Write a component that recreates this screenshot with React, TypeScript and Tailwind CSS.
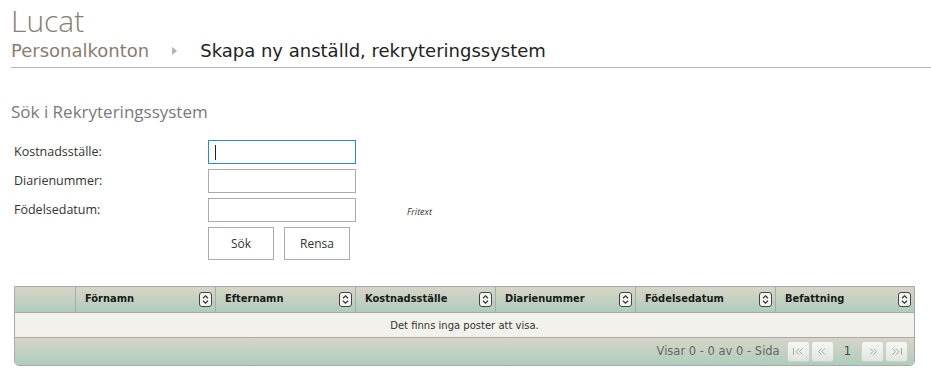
import React from "react";

const SortIcon = () => (
  <span className="absolute right-[3px] top-[5px] flex h-[15px] w-[13px] items-center justify-center rounded-[3px] border border-[#444] bg-[#f4f4f0]">
    <svg width="9" height="11" viewBox="0 0 9 11">
      <path d="M2 4.2 L4.5 1.8 L7 4.2" fill="none" stroke="#333" strokeWidth="1.2" />
      <path d="M2 6.8 L4.5 9.2 L7 6.8" fill="none" stroke="#333" strokeWidth="1.2" />
    </svg>
  </span>
);

const PagerBtn = ({ kind }: { kind: "first" | "prev" | "next" | "last" }) => {
  const c = "#a3aaa3";
  let content: React.ReactNode = null;
  if (kind === "first")
    content = (
      <>
        <path d="M3.5 3 V10" stroke={c} strokeWidth="1" />
        <path d="M9 3.5 L6 6.5 L9 9.5" fill="none" stroke={c} strokeWidth="1" />
        <path d="M12.5 3.5 L9.5 6.5 L12.5 9.5" fill="none" stroke={c} strokeWidth="1" />
      </>
    );
  if (kind === "prev")
    content = (
      <>
        <path d="M7.5 3.5 L4.5 6.5 L7.5 9.5" fill="none" stroke={c} strokeWidth="1" />
        <path d="M11 3.5 L8 6.5 L11 9.5" fill="none" stroke={c} strokeWidth="1" />
      </>
    );
  if (kind === "next")
    content = (
      <>
        <path d="M5 3.5 L8 6.5 L5 9.5" fill="none" stroke={c} strokeWidth="1" />
        <path d="M8.5 3.5 L11.5 6.5 L8.5 9.5" fill="none" stroke={c} strokeWidth="1" />
      </>
    );
  if (kind === "last")
    content = (
      <>
        <path d="M3.5 3.5 L6.5 6.5 L3.5 9.5" fill="none" stroke={c} strokeWidth="1" />
        <path d="M7 3.5 L10 6.5 L7 9.5" fill="none" stroke={c} strokeWidth="1" />
        <path d="M12.5 3 V10" stroke={c} strokeWidth="1" />
      </>
    );
  return (
    <span className="flex h-[21px] w-[23px] items-center justify-center rounded-[3px] border border-[#cdd2cb] bg-gradient-to-b from-[#f7f7f4] to-[#e0e5de]">
      <svg width="16" height="13" viewBox="0 0 16 13">
        {content}
      </svg>
    </span>
  );
};

export default function App() {
  const cols = ["Förnamn", "Efternamn", "Kostnadsställe", "Diarienummer", "Födelsedatum", "Befattning"];
  return (
    <div className="h-[382px] w-[931px] bg-white" style={{ fontFamily: '"Open Sans", "Noto Sans", sans-serif' }}>
      <div className="pl-[11px]">
        <div className="pt-[2px] text-[30px] font-light leading-[38px] text-[#8b7d71]" style={{ fontFamily: '"Open Sans", sans-serif' }}>Lucat</div>
        <div className="flex items-center text-[18px] leading-[22px]" style={{ fontFamily: '"DejaVu Sans", Verdana, sans-serif' }}>
          <span className="text-[#8b7d71]">Personalkonton</span>
          <svg className="ml-[23px] mr-[23px]" width="5" height="8" viewBox="0 0 5 8">
            <path d="M0 0 L5 4 L0 8 Z" fill="#b3b3b3" />
          </svg>
          <span className="text-[#222]">Skapa ny anställd, rekryteringssystem</span>
        </div>
        <div className="mt-[5px] h-px bg-[#b5b5b5]" />
      </div>

      <div className="pl-[11px] pt-[32px] text-[17px] leading-[24px] text-[#7a7a7a]">Sök i Rekryteringssystem</div>

      <div className="mt-[16px] pl-[14px] text-[12.5px] text-[#333]">
        <div className="flex h-[24px] items-center">
          <span className="w-[194px]">Kostnadsställe:</span>
          <div className="flex h-[24px] w-[148px] items-center border border-[#2b88d8] bg-white pl-[6px]">
            <span className="h-[15px] w-px bg-[#222]" />
          </div>
        </div>
        <div className="mt-[5px] flex h-[24px] items-center">
          <span className="w-[194px]">Diarienummer:</span>
          <div className="h-[24px] w-[148px] border border-[#ababab] bg-white" />
        </div>
        <div className="mt-[5px] flex h-[24px] items-center">
          <span className="w-[194px]">Födelsedatum:</span>
          <div className="h-[24px] w-[148px] border border-[#ababab] bg-white" />
          <span className="ml-[51px] mt-[4px] text-[9px] italic text-[#333]">Fritext</span>
        </div>
        <div className="mt-[5px] flex pl-[194px]">
          <div className="flex h-[33px] w-[66px] items-center justify-center border border-[#ababab] bg-white text-[12px]">Sök</div>
          <div className="ml-[10px] flex h-[33px] w-[66px] items-center justify-center border border-[#ababab] bg-white text-[12px]">Rensa</div>
        </div>
      </div>

      <div className="ml-[14px] mt-[26px] w-[901px] overflow-hidden rounded-b-[5px] border border-[#a9a9a9]" style={{ fontFamily: '"DejaVu Sans Condensed", Tahoma, sans-serif' }}>
        <div className="flex h-[26px] border-b border-[#a9a9a9] bg-gradient-to-b from-[#d7d5c7] to-[#aecdbc]">
          <div className="w-[61px] border-r border-[#a9a9a9]" />
          {cols.map((c, i) => (
            <div key={c} className={`relative flex items-center pl-[9px] text-[11px] font-bold text-[#1a1a1a] ${i === 5 ? "flex-1" : "w-[140px] border-r border-[#a9a9a9]"}`}>
              {c}
              <SortIcon />
            </div>
          ))}
        </div>
        <div className="flex h-[25px] items-center justify-center border-b border-[#a9a9a9] bg-[#f2f1ec] text-[10px] text-[#333]" style={{ fontFamily: '"DejaVu Sans", Verdana, sans-serif' }}>
          Det finns inga poster att visa.
        </div>
        <div className="flex h-[27px] items-center justify-end gap-[1px] bg-gradient-to-b from-[#d7d5c7] to-[#aecdbc] pr-[6px]">
          <span className="mr-[6px] text-[11.5px] text-[#666]" style={{ fontFamily: '"DejaVu Sans", Verdana, sans-serif' }}>Visar 0 - 0 av 0 - Sida</span>
          <PagerBtn kind="first" />
          <PagerBtn kind="prev" />
          <span className="mx-[9px] text-[11.5px] text-[#444]" style={{ fontFamily: '"DejaVu Sans", Verdana, sans-serif' }}>1</span>
          <PagerBtn kind="next" />
          <PagerBtn kind="last" />
        </div>
      </div>
    </div>
  );
}
